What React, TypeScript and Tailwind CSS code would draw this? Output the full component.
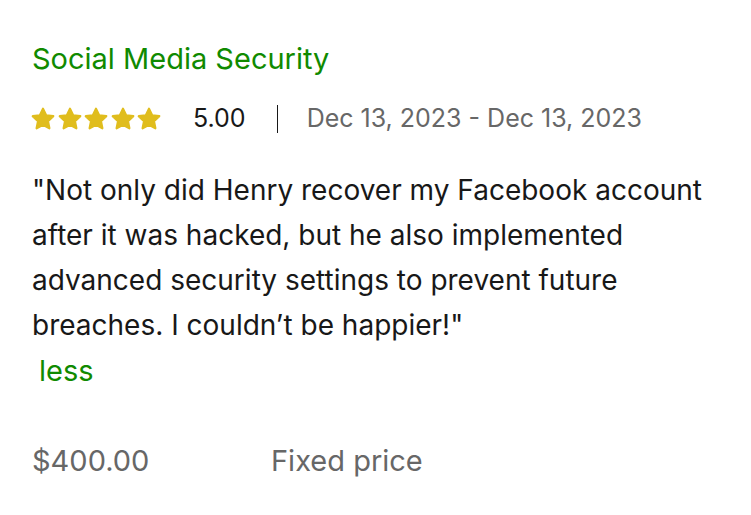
const STAR_PATH =
  "M12 2.5l2.9 6.1 6.6.8-4.9 4.6 1.3 6.6L12 17.3l-5.9 3.3 1.3-6.6-4.9-4.6 6.6-.8z";

function Stars({ count }: { count: number }) {
  return (
    <div className="-ml-[2px] flex items-center gap-[0.5px]">
      {Array.from({ length: count }).map((_, i) => (
        <svg key={i} viewBox="0 0 24 24" className="h-[26px] w-[26px]">
          <path d={STAR_PATH} fill="#e0bd1d" stroke="#e0bd1d" strokeWidth="2" strokeLinejoin="round" />
        </svg>
      ))}
    </div>
  );
}

export default function App() {
  return (
    <div
      className="min-h-[515px] w-[751px] bg-white px-[32px] pt-[40px] text-[#181818]"
      style={{ fontFamily: 'Inter, "Liberation Sans", Arial, sans-serif' }}
    >
      <h3 className="text-[29px] leading-[38px] text-[#108a00]">Social Media Security</h3>
      <div className="mt-[22px] flex items-center">
        <Stars count={5} />
        <span className="ml-[31px] text-[25px]">5.00</span>
        <span className="ml-[31px] h-[28px] w-px bg-[#181818]" />
        <span className="ml-[29px] text-[25px] text-[#676767]">Dec 13, 2023 - Dec 13, 2023</span>
      </div>
      <p className="mt-[30px] w-[690px] text-[28px] leading-[45px]">
        "Not only did Henry recover my Facebook account after it was hacked, but he also
        implemented advanced security settings to prevent future breaches. I couldn’t be
        happier!"
      </p>
      <button className="ml-[7px] text-[29px] leading-[45px] text-[#108a00]">less</button>
      <div className="mt-[45px] flex items-center text-[29px] leading-[45px] text-[#676767]">
        <span className="w-[239px]">$400.00</span>
        <span>Fixed price</span>
      </div>
    </div>
  );
}
